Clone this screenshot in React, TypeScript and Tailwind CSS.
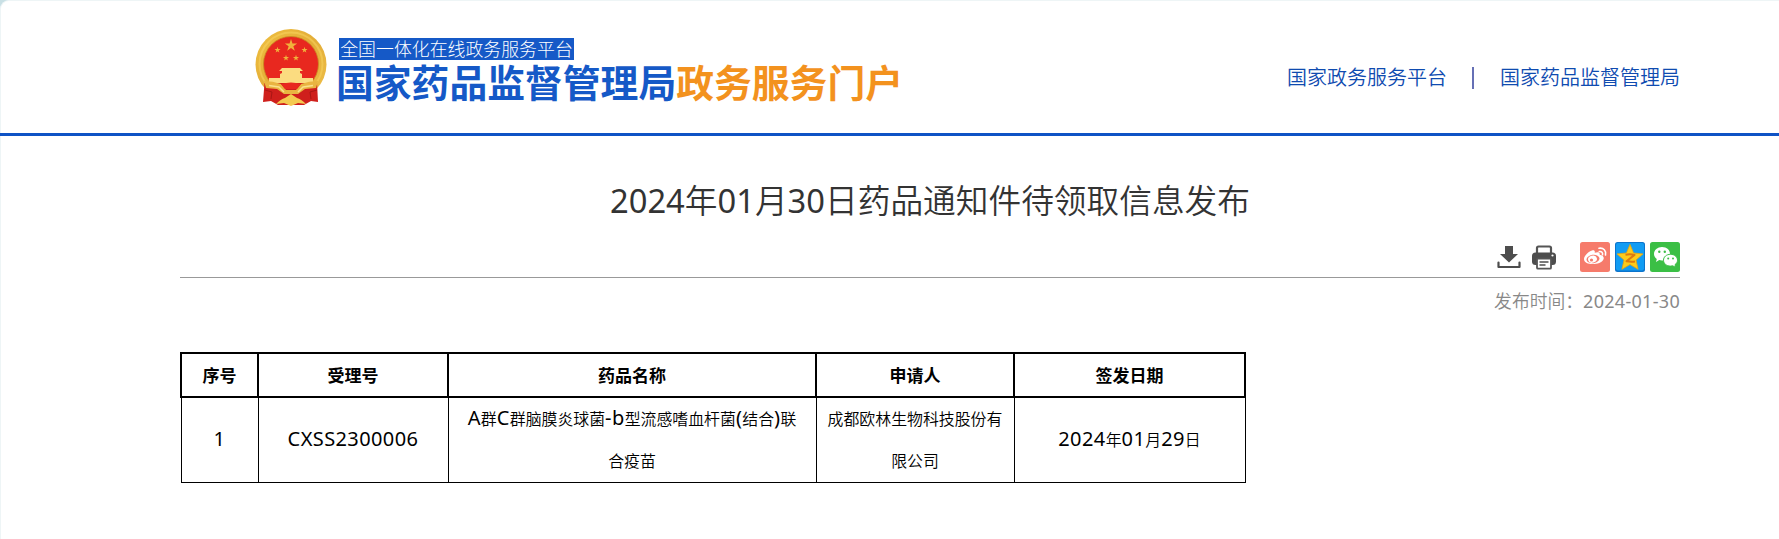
import React from 'react'

type Row = {
    id: string,
    code: string,
    name: string,
    applicant: string,
    date: string,
}

const columns = ['序号', '受理号', '药品名称', '申请人', '签发日期'];

const rows: Row[] = [
    {
        id: '1',
        code: 'CXSS2300006',
        name: 'A群C群脑膜炎球菌-b型流感嗜血杆菌(结合)联合疫苗',
        applicant: '成都欧林生物科技股份有限公司',
        date: '2024年01月29日',
    },
];

const STAR = 'M0 -1 L.225 -.309 L.951 -.309 L.363 .118 L.588 .809 L0 .382 L-.588 .809 L-.363 .118 L-.951 -.309 L-.225 -.309Z';

function Emblem() {
    return (
        <svg className="block shrink-0" width="72" height="78" viewBox="0 0 72 78">
            <defs>
                <linearGradient id="gold" x1="0" y1="0" x2="1" y2="1">
                    <stop offset="0" stopColor="#f0c040" />
                    <stop offset=".5" stopColor="#e3ad38" />
                    <stop offset="1" stopColor="#efc04a" />
                </linearGradient>
            </defs>
            <circle cx="36" cy="36.500" r="35.500" fill="url(#gold)" />
            <circle cx="36" cy="36" r="31.500" fill="none" stroke="#f6d05c" strokeWidth="2" opacity=".6" />
            <circle cx="36" cy="36" r="27.500" fill="#e8281f" stroke="#c98d22" strokeWidth=".8" />
            <path d="M9.500 55 L62 55 L63 74 L56 73 L49 77 L23 77 L16 73 L8 74Z" fill="#cf1f1c" />
            <path d="M14 55 L14 50 L25 50 L25 46 L27 45 L27 43 L24 43 L27 40 L45 40 L48 43 L45 43 L45 45 L47 46 L47 50 L58 50 L58 55Z" fill="#fbdc80" />
            <path d="M9 53 Q18 53 26 56 L31 62 L41 62 L46 56 Q54 53 63 53 L61 60 L50 61 L43 66 L29 66 L22 61 L11 60Z" fill="#e9b441" />
            <path d="M14 57.500 L24 59 L29 64 M58 57.500 L48 59 L43 64" fill="none" stroke="#fbe08b" strokeWidth="1.500" />
            <path d="M26 56 Q36 53 46 56 L42 61 L30 61Z" fill="#e8281f" />
            <path d="M21 76 Q26 71 30 70 L36 66 L42 70 Q46 71 51 76 L43 75 L36 78 L29 75Z" fill="#f4ca50" />
            <path d="M10 62 L17 64 L16 71 M62 62 L55 64 L56 71" fill="none" stroke="#a91614" strokeWidth="1" />
            <g fill="#f0b23b">
                <path transform="translate(36 17.500) scale(6.500)" d={STAR} />
                <path transform="translate(22.500 22) scale(3.200)" d={STAR} />
                <path transform="translate(49.500 22) scale(3.200)" d={STAR} />
                <path transform="translate(31 30) scale(3.200)" d={STAR} />
                <path transform="translate(41 30) scale(3.200)" d={STAR} />
            </g>
        </svg>
    );
}

function DownloadIcon() {
    return (
        <svg className="block" width="24" height="24" viewBox="0 0 24 24" fill="#4d4d4d">
            <path d="M8 1h8v8h5l-9 8.500-9-8.500h5z" />
            <path d="M1.500 17.500v4.500h21v-4.500" fill="none" stroke="#4d4d4d" strokeWidth="2.200" strokeLinecap="round" strokeLinejoin="round" />
        </svg>
    );
}

function PrintIcon() {
    return (
        <svg className="block" width="24" height="25" viewBox="0 0 24 25">
            <path d="M5 8V3q0-1.500 1.500-1.500h11Q19 1.500 19 3v5" fill="#fff" stroke="#555" strokeWidth="2.200" />
            <rect x="0" y="7.500" width="24" height="12.500" rx="3.500" fill="#4d4d4d" />
            <circle cx="20.500" cy="10.500" r="1.100" fill="#fff" />
            <rect x="5" y="13.500" width="14" height="10.200" rx="1" fill="#fff" stroke="#555" strokeWidth="1.800" />
            <path d="M7.500 17h9M7.500 20h6" stroke="#4d4d4d" strokeWidth="1.500" />
        </svg>
    );
}

function WeiboIcon() {
    return (
        <svg className="block" width="30" height="30" viewBox="0 0 30 30">
            <rect width="30" height="30" rx="2.500" fill="#f67b6b" />
            <path d="M12 8.500c2-.7 3.300.2 2.700 2.300 3-1.200 5.700-.7 4.900 2 3.600.6 4.800 2.600 3.800 4.600-2.300 5.700-18.900 6.600-19.400-.2C3.800 14 8.500 9.500 12 8.500z" fill="#fff" />
            <ellipse cx="13" cy="17" rx="6.500" ry="4.200" fill="#f67b6b" transform="rotate(-8 13 17)" />
            <ellipse cx="12.500" cy="17.200" rx="4.500" ry="3.500" fill="#fff" transform="rotate(-15 12.500 17.200)" />
            <circle cx="11.500" cy="18" r="1.600" fill="#f67b6b" />
            <path d="M19 6.300c4.500-.8 7.500 2.500 6.500 6.700M19.300 9.500c2.300-.4 3.700 1.200 3.200 3.200" fill="none" stroke="#fff" strokeWidth="1.600" strokeLinecap="round" />
        </svg>
    );
}

function QzoneIcon() {
    return (
        <svg className="block" width="30" height="30" viewBox="0 0 30 30">
            <rect width="30" height="30" rx="2.500" fill="#0b74cc" />
            <rect x="1" y="1" width="28" height="27.500" rx="2" fill="#119cf3" />
            <path d="M15 2.500l3.600 8.500 9.400.9-7 6.200 2.100 9.200-8.100-4.800-8.100 4.800L9 18.100l-7-6.200 9.400-.9z" fill="#fccb1b" stroke="#e9a50f" strokeWidth=".8" strokeLinejoin="round" />
            <path d="M10.500 12.700q5-.8 9 .2l-8 6.300q4.500.8 8.500.2" fill="none" stroke="#dd7a10" strokeWidth="2" strokeLinejoin="round" />
        </svg>
    );
}

function WechatIcon() {
    return (
        <svg className="block" width="30" height="30" viewBox="0 0 30 30">
            <rect width="30" height="30" rx="2.500" fill="#3bbf45" />
            <path d="M12 5c5 0 8 3.200 8 6.800 0 4-3.500 6.700-8 6.700-1 0-2-.1-2.800-.4L6 20l.8-3C5 15.700 4 13.900 4 11.800 4 8 7.500 5 12 5z" fill="#fff" />
            <path d="M20.500 12.300c4 0 7 2.600 7 5.900 0 1.900-1 3.400-2.500 4.500l.6 2.600-2.900-1.500c-.7.2-1.400.3-2.200.3-4 0-7-2.600-7-5.900s3-5.900 7-5.900z" fill="#fff" stroke="#3bbf45" strokeWidth="1" />
            <g fill="#3bbf45">
                <circle cx="9.300" cy="9.800" r="1.200" />
                <circle cx="14.800" cy="9.800" r="1.200" />
                <circle cx="18.200" cy="16.500" r="1" />
                <circle cx="23" cy="16.500" r="1" />
            </g>
        </svg>
    );
}

// Latin runs are set apart from the Chinese text around them
function Mixed({ text, latin }: { text: string, latin: string }) {
    return (
        <>
            {text.split(/([\x20-\x7e]+)/).filter(Boolean).map((part, i) =>
                /^[\x20-\x7e]/.test(part)
                    ? <span key={i} className={latin}>{part}</span>
                    : <React.Fragment key={i}>{part}</React.Fragment>
            )}
        </>
    );
}

export default function App() {
    return (
        <div className="h-[539px] overflow-hidden bg-[#c9e0e5] font-['Noto_Sans','Noto_Sans_CJK_SC',sans-serif]">
            <div className="h-full rounded-tl-[9px] border-t border-l border-[#eef5f6] bg-white">
                <header className="-ml-px flex h-[135px] items-start justify-between border-b-3 border-[#0f53c5] pr-[99px] pl-[255px]">
                    <div className="flex pt-[27px]">
                        <Emblem />
                        <div className="ml-[10px] pt-[10px]">
                            <div className="ml-[2px] flex h-[22px] w-[235px] items-center justify-center bg-[#1559c7] pt-px text-[17.900px] leading-none font-light whitespace-nowrap text-white">
                                全国一体化在线政务服务平台
                            </div>
                            <div className="mt-[4px] -ml-px text-[37.800px] leading-[38px] font-bold whitespace-nowrap text-[#1559c7]">
                                国家药品监督管理局<span className="text-[#f3921e]">政务服务门户</span>
                            </div>
                        </div>
                    </div>
                    <nav className="flex items-center pt-[63px] text-[20px] leading-[28px] font-[350] text-[#0f4bb0]">
                        <a>国家政务服务平台</a>
                        <span className="mr-[26px] ml-[25px] h-[22px] w-[2px] bg-[#6670b5]" />
                        <a>国家药品监督管理局</a>
                    </nav>
                </header>

                <main className="mr-[99px] ml-[179px]">
                    <h1 className="pt-[41px] text-center text-[32.700px] leading-[48px] font-[350] text-[#333]">
                        <Mixed text="2024年01月30日药品通知件待领取信息发布" latin="font-normal" />
                    </h1>
                    <div className="flex h-[53px] items-start justify-end border-b border-[#999] pt-[17px]">
                        <div className="mt-[3px] mr-[24px] flex gap-[11px]">
                            <DownloadIcon />
                            <PrintIcon />
                        </div>
                        <div className="flex gap-[5px]">
                            <WeiboIcon />
                            <QzoneIcon />
                            <WechatIcon />
                        </div>
                    </div>
                    <p className="pt-[9px] text-right text-[17.800px] leading-[28px] font-[350] text-[#888]">
                        <Mixed text="发布时间：2024-01-30" latin="text-[18px] font-normal tracking-[.3px]" />
                    </p>

                    <table className="mt-[37px] w-[1065px] table-fixed border-collapse text-center text-black">
                        <colgroup>
                            <col className="w-[77px]" />
                            <col className="w-[190px]" />
                            <col className="w-[368px]" />
                            <col className="w-[198px]" />
                            <col className="w-[231px]" />
                        </colgroup>
                        <thead>
                            <tr className="h-[44px]">
                                {columns.map((c) => (
                                    <th key={c} className="border-2 border-black px-0 pt-[2px] pb-0 text-[17px] leading-[24px] font-bold">{c}</th>
                                ))}
                            </tr>
                        </thead>
                        <tbody>
                            {rows.map((r) => (
                                <tr key={r.id} className="text-[15.900px] leading-[41.500px] font-[350] [&>td]:h-[84px] [&>td]:border [&>td]:border-black [&>td]:pt-px">
                                    {[r.id, r.code, r.name, r.applicant, r.date].map((v) => (
                                        <td key={v} className={v === r.name ? 'px-[15px]' : 'px-[9px]'}>
                                            <Mixed text={v} latin="text-[20px] leading-none font-normal tracking-[.4px]" />
                                        </td>
                                    ))}
                                </tr>
                            ))}
                        </tbody>
                    </table>
                </main>
            </div>
        </div>
    );
}
